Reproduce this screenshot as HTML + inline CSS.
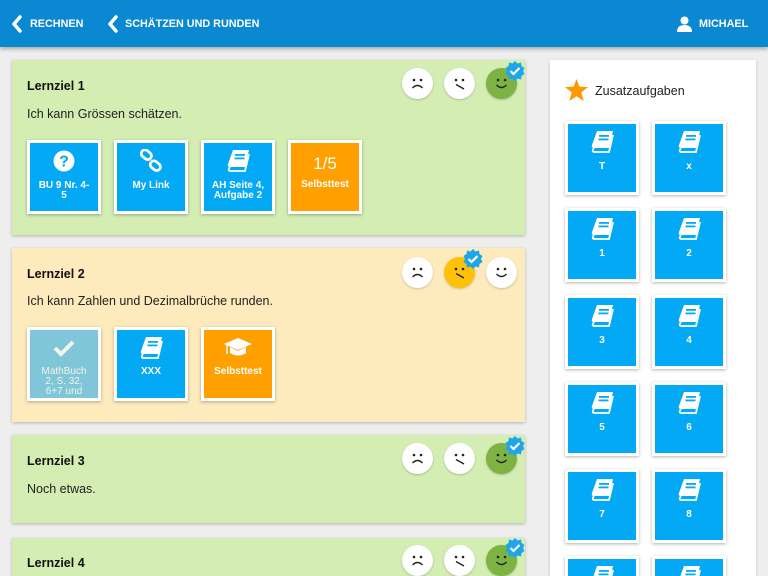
<!DOCTYPE html>
<html style="width:768px;height:576px;overflow:hidden"><head><meta charset="utf-8"><style>
*{box-sizing:border-box;margin:0;padding:0}
body{width:768px;height:576px;overflow:hidden;background:#eeeeee;font-family:"Liberation Sans",sans-serif;position:relative}
.hdr{position:absolute;left:0;top:0;width:768px;height:47px;background:#0a88d2;box-shadow:0 2px 4px rgba(0,0,0,.3);color:#fff;font-weight:bold;font-size:10.8px;z-index:2}
.hdr span{position:absolute;top:18px}
.card{position:absolute;left:12px;width:513px;box-shadow:0 1px 3px rgba(0,0,0,.25)}
.g{background:#d3edb3}.y{background:#fdebbd}
.t{position:absolute;left:15px;font-weight:bold;font-size:12.5px;color:#111}
.d{position:absolute;left:15px;font-size:12.5px;color:#222}
.tile{position:absolute;width:74px;height:74px;border:3px solid #fff;box-shadow:0 1px 3px rgba(0,0,0,.3);color:#fff;font-weight:bold;font-size:10px;text-align:center;line-height:10px;overflow:hidden}
.b{background:#03a9f4}.o{background:#ffa000}.m{background:#7fc6d8;color:#f4f4e8}
.tile svg{position:absolute;left:50%;margin-left:-12px;top:6px}
.tile .l{position:absolute;left:8px;right:8px;top:38px}
.sm{position:absolute;width:31px;height:31px;border-radius:50%;box-shadow:0 1px 2px rgba(0,0,0,.2)}
.side{position:absolute;left:550px;top:60px;width:206px;height:516px;background:#fff;box-shadow:0 1px 3px rgba(0,0,0,.2);overflow:hidden}
</style></head><body>
<div class="hdr">
<svg style="position:absolute;left:11px;top:15px" width="12" height="18" viewBox="0 0 12 18"><path d="M9 2 L3 9 L9 16" stroke="#fff" stroke-width="3.5" fill="none" stroke-linecap="round" stroke-linejoin="round"/></svg>
<span style="left:30px">RECHNEN</span>
<svg style="position:absolute;left:107px;top:15px" width="12" height="18" viewBox="0 0 12 18"><path d="M9 2 L3 9 L9 16" stroke="#fff" stroke-width="3.5" fill="none" stroke-linecap="round" stroke-linejoin="round"/></svg>
<span style="left:125px">SCHÄTZEN UND RUNDEN</span>
<svg style="position:absolute;left:677px;top:16px" width="15" height="16" viewBox="0 0 15 16"><circle cx="7.5" cy="4.5" r="4" fill="#fff"/><path d="M0 16 Q0 9 7.5 9 Q15 9 15 16Z" fill="#fff"/></svg>
<span style="left:699px">MICHAEL</span>
</div>

<svg width="0" height="0" style="position:absolute"><defs>
<g id="book"><path d="M7 1 H23 L19 18 H4 Q1 18 2 15Z" fill="#fff"/><path d="M4 18 Q1 22 5 22 H19 L23 5" stroke="#fff" stroke-width="1.8" fill="none"/><rect x="9" y="5" width="10" height="1.8" fill="#03a9f4"/><rect x="8.5" y="8.5" width="10" height="1.8" fill="#03a9f4"/></g>
<g id="sad"><circle cx="12" cy="12" r="1.3" fill="#222"/><circle cx="19" cy="12" r="1.3" fill="#222"/><path d="M10.5 20 Q15.5 15 20.5 20" stroke="#222" stroke-width="1.4" fill="none"/></g>
<g id="neu"><circle cx="12" cy="12" r="1.3" fill="#222"/><circle cx="19" cy="12" r="1.3" fill="#222"/><path d="M12 16.5 L20 21" stroke="#222" stroke-width="1.4" fill="none"/></g>
<g id="hap"><circle cx="12" cy="12" r="1.3" fill="#222"/><circle cx="19" cy="12" r="1.3" fill="#222"/><path d="M10.5 17 Q15.5 22 20.5 17" stroke="#222" stroke-width="1.4" fill="none"/></g>
<g id="badge"><polygon points="10,0 12.5,2.5 16,1.5 16.5,5 19.5,7 18,10 19.5,13 16.5,15 16,18.5 12.5,17.5 10,20 7.5,17.5 4,18.5 3.5,15 0.5,13 2,10 0.5,7 3.5,5 4,1.5 7.5,2.5" fill="#1ea5ea"/><path d="M5.5 10 L8.5 13 L14.5 7" stroke="#fff" stroke-width="2.2" fill="none"/></g>
</defs></svg>

<div class="card g" style="top:60px;height:175px">
<div class="t" style="top:19px">Lernziel 1</div>
<div class="d" style="top:47px">Ich kann Grössen schätzen.</div>
<div class="tile b" style="left:15px;top:80px"><svg width="24" height="24" viewBox="0 0 24 24"><circle cx="12" cy="12" r="10.5" fill="#fff"/><text x="12" y="17.5" font-size="16" font-weight="bold" text-anchor="middle" fill="#03a9f4" font-family="Liberation Sans">?</text></svg><div class="l">BU 9 Nr. 4-5</div></div>
<div class="tile b" style="left:102px;top:80px"><svg width="24" height="24" viewBox="0 0 24 24"><rect x="2" y="2" width="11" height="7.5" rx="3.7" transform="rotate(40 7.5 5.5)" stroke="#fff" stroke-width="2.7" fill="none"/><rect x="11" y="13" width="11" height="7.5" rx="3.7" transform="rotate(40 16.5 16.5)" stroke="#fff" stroke-width="2.7" fill="none"/></svg><div class="l">My Link</div></div>
<div class="tile b" style="left:189px;top:80px"><svg width="24" height="24" viewBox="0 0 24 24"><use href="#book"/></svg><div class="l" style="left:4px;right:4px">AH Seite 4, Aufgabe 2</div></div>
<div class="tile o" style="left:276px;top:80px"><div style="position:absolute;left:0;right:0;top:12px;font-size:17px;font-weight:normal;line-height:18px">1/5</div><div class="l" style="top:37px;left:2px;right:2px">Selbsttest</div></div>
<div class="sm" style="left:390px;top:8px;background:#fff"><svg width="31" height="31"><use href="#sad"/></svg></div>
<div class="sm" style="left:432px;top:8px;background:#fff"><svg width="31" height="31"><use href="#neu"/></svg></div>
<div class="sm" style="left:474px;top:8px;background:#7cb342"><svg width="31" height="31"><use href="#hap"/></svg></div>
<svg style="position:absolute;left:493px;top:1px" width="20" height="20"><use href="#badge"/></svg>
</div>

<div class="card y" style="top:248px;height:174px">
<div class="t" style="top:19px">Lernziel 2</div>
<div class="d" style="top:46px">Ich kann Zahlen und Dezimalbrüche runden.</div>
<div class="tile m" style="left:15px;top:79px"><svg width="24" height="24" viewBox="0 0 24 24"><path d="M3 12 L9 18 L21 6" stroke="#f4f4e8" stroke-width="4" fill="none"/></svg><div class="l" style="top:37px;font-weight:normal;left:9px;right:9px">MathBuch 2, S. 32, 6+7 und</div></div>
<div class="tile b" style="left:102px;top:79px"><svg width="24" height="24" viewBox="0 0 24 24"><use href="#book"/></svg><div class="l" style="top:37px">XXX</div></div>
<div class="tile o" style="left:189px;top:79px"><svg width="30" height="22" viewBox="0 0 30 22" style="margin-left:-15px"><path d="M15 2 L29 8 L15 14 L1 8Z" fill="#fff"/><path d="M7 11 V17 Q15 22 23 17 V11 L15 15Z" fill="#fff"/><path d="M4 9 V18" stroke="#fff" stroke-width="1.5"/></svg><div class="l" style="top:37px;left:2px;right:2px">Selbsttest</div></div>
<div class="sm" style="left:390px;top:9px;background:#fff"><svg width="31" height="31"><use href="#sad"/></svg></div>
<div class="sm" style="left:432px;top:9px;background:#ffc107"><svg width="31" height="31"><use href="#neu"/></svg></div>
<div class="sm" style="left:474px;top:9px;background:#fff"><svg width="31" height="31"><use href="#hap"/></svg></div>
<svg style="position:absolute;left:451px;top:1px" width="20" height="20"><use href="#badge"/></svg>
</div>

<div class="card g" style="top:435px;height:88px">
<div class="t" style="top:19px">Lernziel 3</div>
<div class="d" style="top:47px">Noch etwas.</div>
<div class="sm" style="left:390px;top:8px;background:#fff"><svg width="31" height="31"><use href="#sad"/></svg></div>
<div class="sm" style="left:432px;top:8px;background:#fff"><svg width="31" height="31"><use href="#neu"/></svg></div>
<div class="sm" style="left:474px;top:8px;background:#7cb342"><svg width="31" height="31"><use href="#hap"/></svg></div>
<svg style="position:absolute;left:493px;top:1px" width="20" height="20"><use href="#badge"/></svg>
</div>

<div class="card g" style="top:538px;height:38px">
<div class="t" style="top:18px">Lernziel 4</div>
<div class="sm" style="left:390px;top:7px;background:#fff"><svg width="31" height="31"><use href="#sad"/></svg></div>
<div class="sm" style="left:432px;top:7px;background:#fff"><svg width="31" height="31"><use href="#neu"/></svg></div>
<div class="sm" style="left:474px;top:7px;background:#7cb342"><svg width="31" height="31"><use href="#hap"/></svg></div>
<svg style="position:absolute;left:493px;top:0px" width="20" height="20"><use href="#badge"/></svg>
</div>

<div class="side">
<svg style="position:absolute;left:15px;top:19px" width="23" height="22" viewBox="0 0 24 23"><polygon points="12,0 15,8 24,8.5 17,14 19.5,23 12,18 4.5,23 7,14 0,8.5 9,8" fill="#ff9800"/></svg>
<div style="position:absolute;left:45px;top:24px;font-size:12.5px;color:#222">Zusatzaufgaben</div>
<div class="tile b" style="left:15px;top:61px"><svg width="24" height="24" viewBox="0 0 24 24"><use href="#book"/></svg><div class="l" style="top:38px">T</div></div>
<div class="tile b" style="left:102px;top:61px"><svg width="24" height="24" viewBox="0 0 24 24"><use href="#book"/></svg><div class="l" style="top:38px">x</div></div>
<div class="tile b" style="left:15px;top:148px"><svg width="24" height="24" viewBox="0 0 24 24"><use href="#book"/></svg><div class="l" style="top:38px">1</div></div>
<div class="tile b" style="left:102px;top:148px"><svg width="24" height="24" viewBox="0 0 24 24"><use href="#book"/></svg><div class="l" style="top:38px">2</div></div>
<div class="tile b" style="left:15px;top:235px"><svg width="24" height="24" viewBox="0 0 24 24"><use href="#book"/></svg><div class="l" style="top:38px">3</div></div>
<div class="tile b" style="left:102px;top:235px"><svg width="24" height="24" viewBox="0 0 24 24"><use href="#book"/></svg><div class="l" style="top:38px">4</div></div>
<div class="tile b" style="left:15px;top:322px"><svg width="24" height="24" viewBox="0 0 24 24"><use href="#book"/></svg><div class="l" style="top:38px">5</div></div>
<div class="tile b" style="left:102px;top:322px"><svg width="24" height="24" viewBox="0 0 24 24"><use href="#book"/></svg><div class="l" style="top:38px">6</div></div>
<div class="tile b" style="left:15px;top:409px"><svg width="24" height="24" viewBox="0 0 24 24"><use href="#book"/></svg><div class="l" style="top:38px">7</div></div>
<div class="tile b" style="left:102px;top:409px"><svg width="24" height="24" viewBox="0 0 24 24"><use href="#book"/></svg><div class="l" style="top:38px">8</div></div>
<div class="tile b" style="left:15px;top:496px;height:20px;border-bottom:0"><svg width="24" height="24" viewBox="0 0 24 24"><use href="#book"/></svg></div>
<div class="tile b" style="left:102px;top:496px;height:20px;border-bottom:0"><svg width="24" height="24" viewBox="0 0 24 24"><use href="#book"/></svg></div>
</div>
</body></html>
